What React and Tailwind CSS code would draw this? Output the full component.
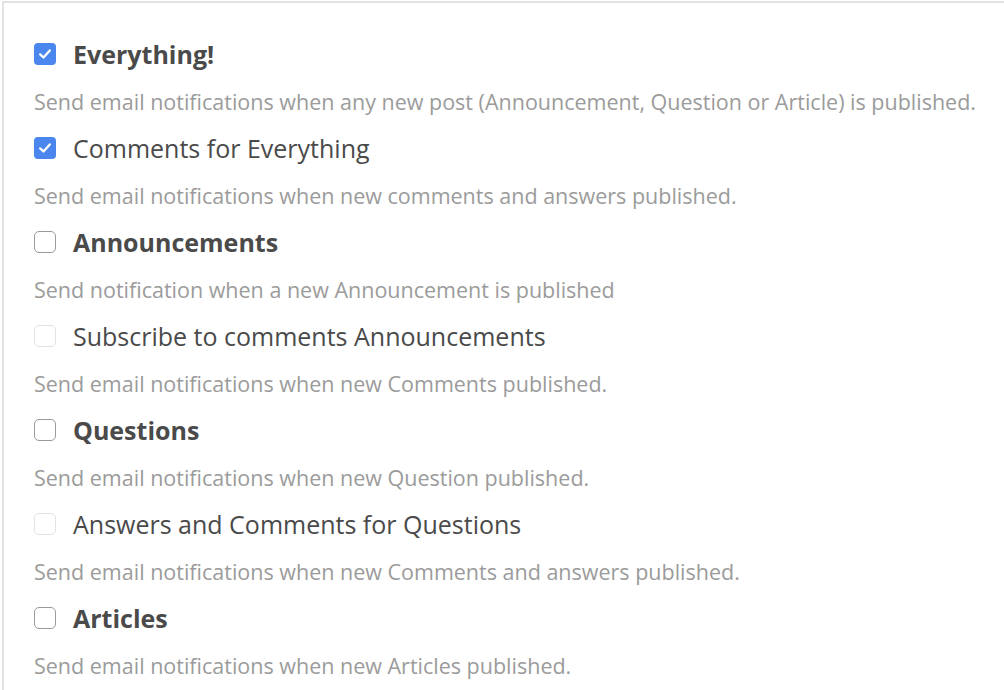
import React from 'react';

const items = [
  { title: 'Everything!', bold: true, checked: true, desc: 'Send email notifications when any new post (Announcement, Question or Article) is published.' },
  { title: 'Comments for Everything', checked: true, desc: 'Send email notifications when new comments and answers published.' },
  { title: 'Announcements', bold: true, desc: 'Send notification when a new Announcement is published' },
  { title: 'Subscribe to comments Announcements', disabled: true, desc: 'Send email notifications when new Comments published.' },
  { title: 'Questions', bold: true, desc: 'Send email notifications when new Question published.' },
  { title: 'Answers and Comments for Questions', disabled: true, desc: 'Send email notifications when new Comments and answers published.' },
  { title: 'Articles', bold: true, desc: 'Send email notifications when new Articles published.' },
];

function Box({ checked, disabled }) {
  if (checked) {
    return (
      <span className="w-[22px] h-[22px] rounded-[4px] bg-[#4a86ee] flex items-center justify-center shrink-0">
        <svg width="16" height="16" viewBox="0 0 16 16" fill="none">
          <path d="M3.2 8.4 L6.5 11.5 L12.8 4.4" stroke="white" strokeWidth="2.3" strokeLinecap="round" strokeLinejoin="round" />
        </svg>
      </span>
    );
  }
  return (
    <span
      className={
        disabled
          ? 'w-[22px] h-[22px] rounded-[5px] border border-[#e2e2e2] bg-white shrink-0'
          : 'w-[22px] h-[22px] rounded-[5px] border border-[#9a9a9a] bg-white shrink-0'
      }
    />
  );
}

export default function App() {
  return (
    <div className="w-[1004px] h-[690px] overflow-hidden bg-white pt-[1px] pl-[2px]" style={{ fontFamily: '"Open Sans", sans-serif' }}>
      <div className="border-t-2 border-l-2 border-[#e3e3e3] pt-[29px] pl-[30px] h-[700px]">
        {items.map((it) => (
          <div key={it.title}>
            <label className="h-[44px] flex items-center gap-[17px]">
              <Box checked={it.checked} disabled={it.disabled} />
              <span className={it.bold ? 'text-[25px] leading-none font-bold text-[#4a4a4a]' : 'text-[25px] leading-none text-[#4a4a4a]'}>
                {it.title}
              </span>
            </label>
            <p className="h-[50px] pt-[2px] flex items-center text-[21.5px] leading-none text-[#9b9b9b]">{it.desc}</p>
          </div>
        ))}
      </div>
    </div>
  );
}
